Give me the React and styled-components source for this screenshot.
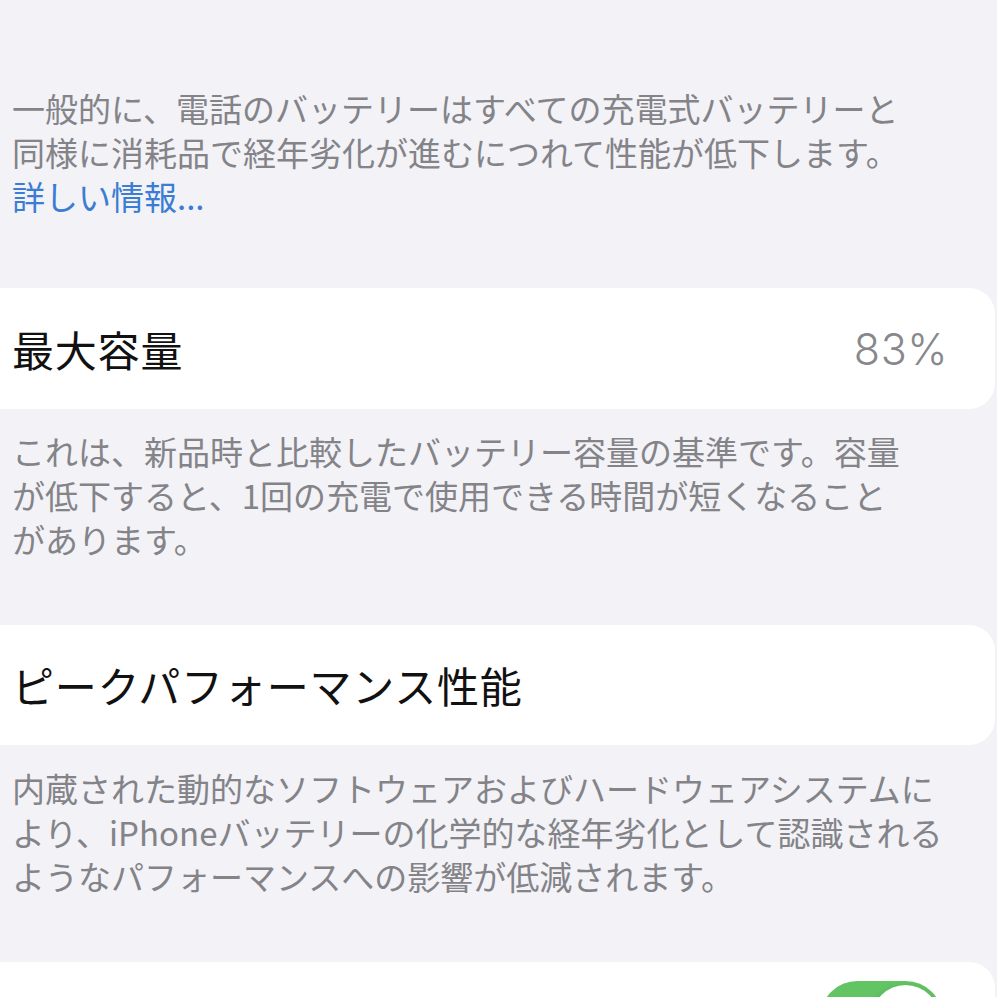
import React from 'react';
import styled, { createGlobalStyle } from 'styled-components';

const GlobalStyle = createGlobalStyle`
  html, body {
    margin: 0;
    padding: 0;
    background: #f2f2f7;
  }
  body {
    font-family: "Noto Sans CJK JP", "Noto Sans", sans-serif;
    -webkit-font-smoothing: antialiased;
  }
`;

const Page = styled.div`
  width: 997px;
  height: 997px;
  overflow: hidden;
  background: #f2f2f7;
  padding-top: 86px;
  box-sizing: border-box;
`;

const Note = styled.p`
  margin: ${(p) => p.$top || 0}px 0 ${(p) => p.$bottom || 0}px;
  padding: 0 12px;
  font-size: 33px;
  line-height: 44px;
  color: #838388;
  white-space: nowrap;
`;

const Link = styled.a`
  color: #3a7dd3;
  text-decoration: none;
`;

const Card = styled.div`
  display: flex;
  align-items: center;
  justify-content: space-between;
  width: 995px;
  height: ${(p) => p.$height || 121}px;
  box-sizing: border-box;
  padding: 0 47px 0 12px;
  background: #ffffff;
  border-radius: 0 26px 26px 0;
`;

const Title = styled.span`
  font-size: 42px;
  line-height: 1;
  color: #111111;
  letter-spacing: 0.8px;
`;

const Value = styled.span`
  font-family: Inter, "Liberation Sans", sans-serif;
  font-size: 43px;
  font-weight: 300;
  color: #88888c;
  letter-spacing: 0.5px;
`;

const Switch = styled.div`
  position: relative;
  width: 123px;
  height: 75px;
  margin-left: auto;
  margin-right: 5px;
  border-radius: 38px;
  background: ${(p) => (p.$on ? '#62c463' : '#e5e5ea')};
`;

const Knob = styled.span`
  position: absolute;
  top: 4px;
  ${(p) => (p.$on ? 'right: 4px;' : 'left: 4px;')}
  width: 67px;
  height: 67px;
  border-radius: 50%;
  background: #ffffff;
  box-shadow: 0 3px 8px rgba(0, 0, 0, 0.15), 0 1px 1px rgba(0, 0, 0, 0.16);
`;

const App = () => {
  return (
    <>
      <GlobalStyle />
      <Page>
        <Note $bottom={70}>
          一般的に、電話のバッテリーはすべての充電式バッテリーと<br />
          同様に消耗品で経年劣化が進むにつれて性能が低下します。<br />
          <Link href="#">詳しい情報...</Link>
        </Note>

        <Card>
          <Title>最大容量</Title>
          <Value>83%</Value>
        </Card>
        <Note $top={20} $bottom={64}>
          これは、新品時と比較したバッテリー容量の基準です。容量<br />
          が低下すると、1回の充電で使用できる時間が短くなること<br />
          があります。
        </Note>

        <Card $height={120}>
          <Title>ピークパフォーマンス性能</Title>
        </Card>
        <Note $top={21} $bottom={64}>
          内蔵された動的なソフトウェアおよびハードウェアシステムに<br />
          より、iPhoneバッテリーの化学的な経年劣化として認識される<br />
          ようなパフォーマンスへの影響が低減されます。
        </Note>

        <Card $height={112}>
          <Switch $on>
            <Knob $on />
          </Switch>
        </Card>
      </Page>
    </>
  );
};

export default App;
